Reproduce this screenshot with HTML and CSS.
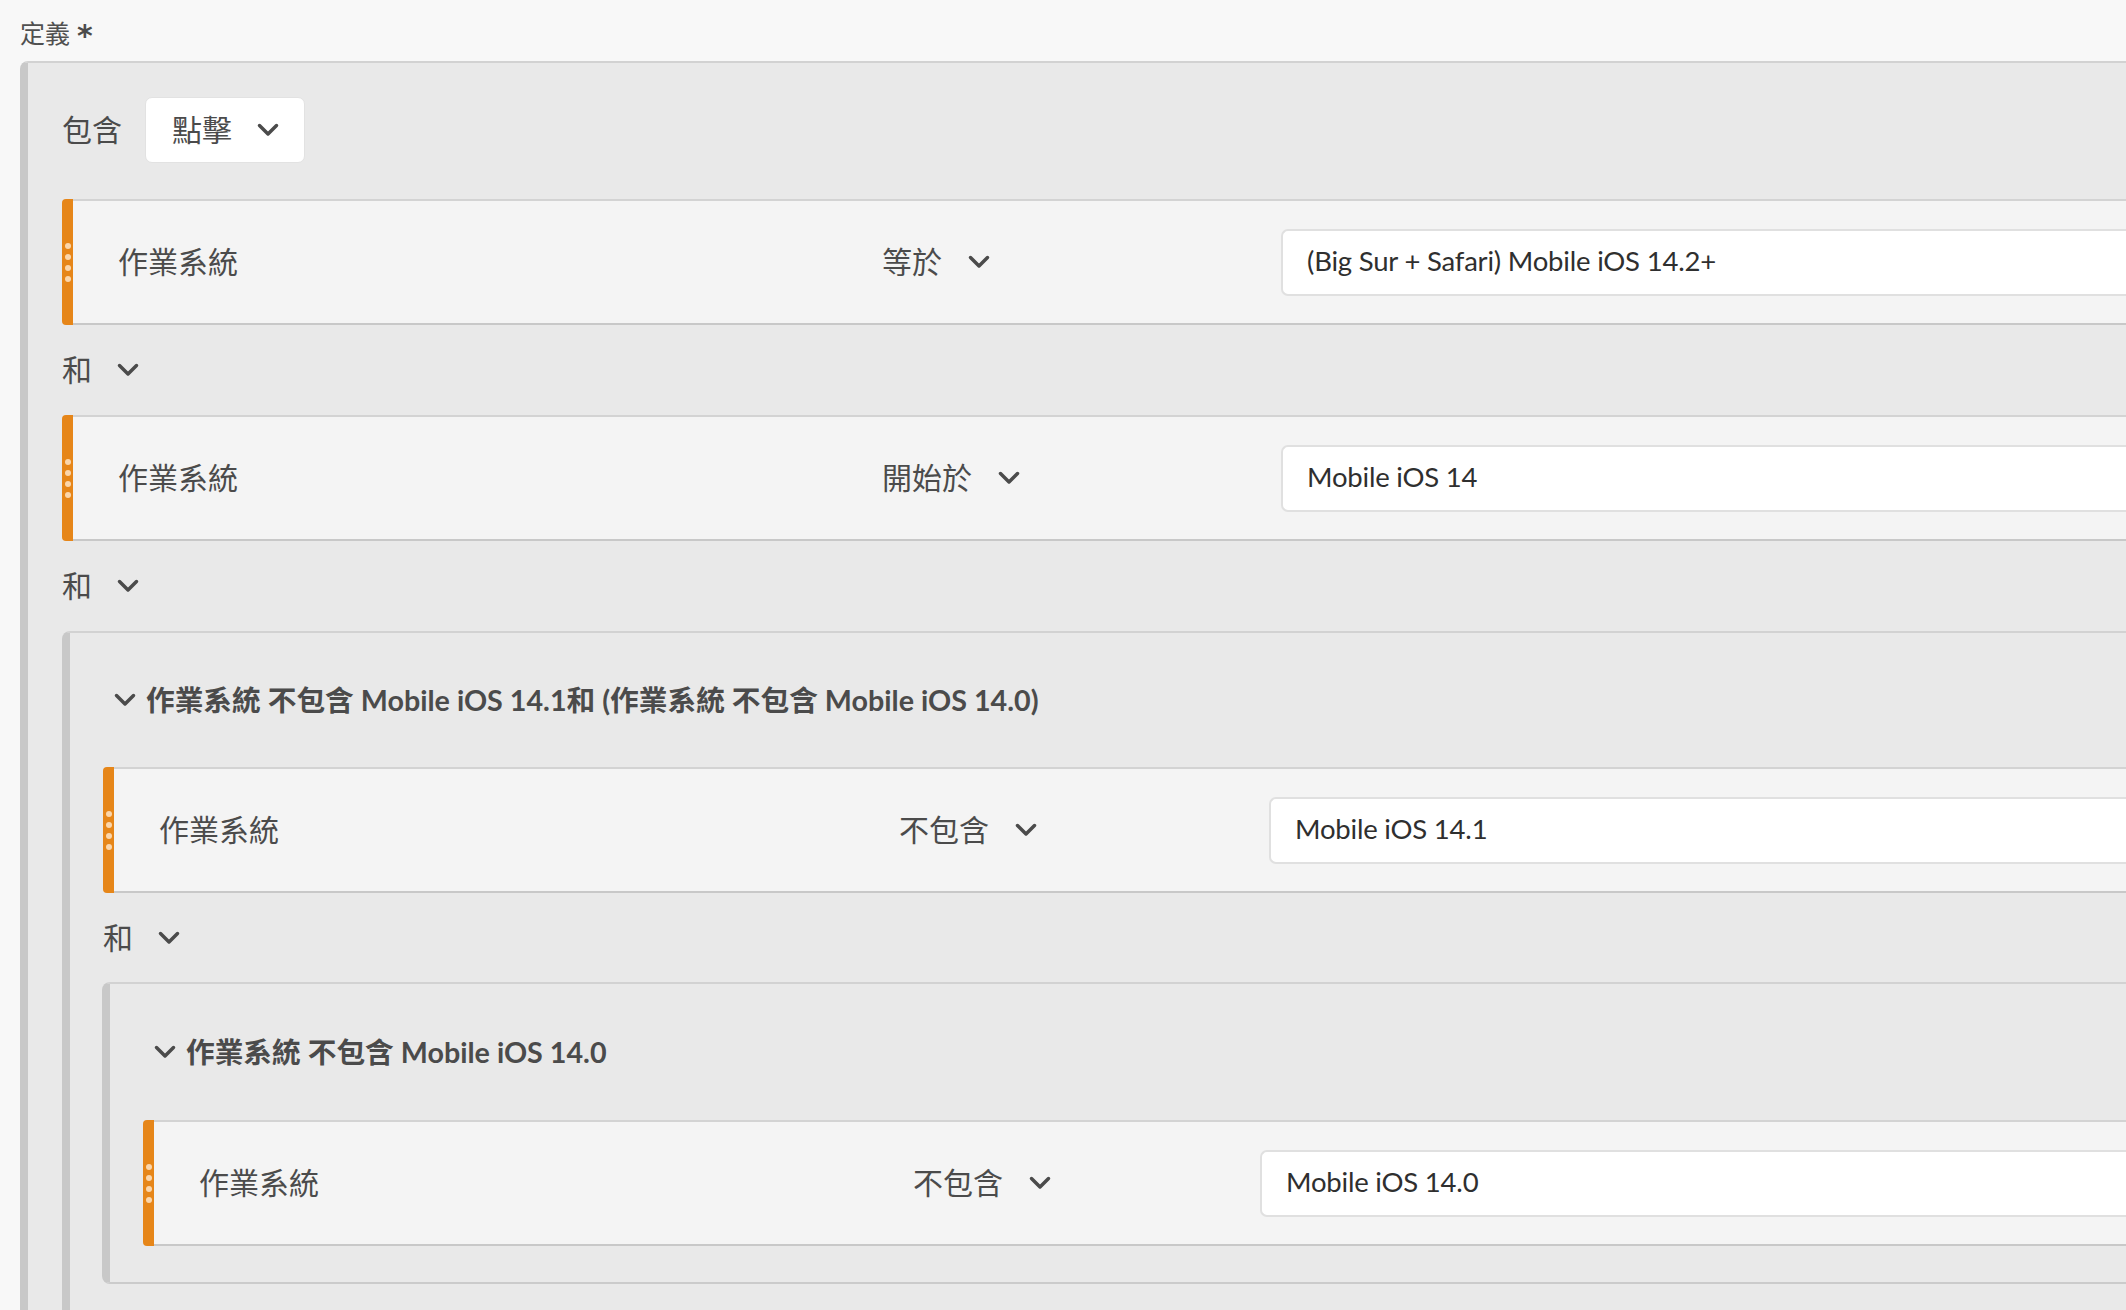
FILE: index.html
```html
<!DOCTYPE html>
<html lang="zh-Hant">
<head>
<meta charset="utf-8">
<title>定義</title>
<link rel="stylesheet" href="styles.css">
</head>
<body>
<div class="page">
  <div class="title">定義 <span class="req">*</span></div>

  <div class="container">
    <div class="topbar">
      <span class="label">包含</span>
      <div class="select">
        <span>點擊</span>
        <svg class="chev" viewBox="0 0 22 14"><path d="M2.5 2.5 L11 11 L19.5 2.5"/></svg>
      </div>
    </div>

    <div class="row row--l0">
      <div class="handle"><i></i><i></i><i></i><i></i></div>
      <div class="row-body">
        <div class="field">作業系統</div>
        <div class="op"><span>等於</span><svg class="chev" viewBox="0 0 22 14"><path d="M2.5 2.5 L11 11 L19.5 2.5"/></svg></div>
        <div class="value"><div class="input">(Big Sur + Safari) Mobile iOS 14.2+</div></div>
      </div>
    </div>

    <div class="connector"><span>和</span><svg class="chev" viewBox="0 0 22 14"><path d="M2.5 2.5 L11 11 L19.5 2.5"/></svg></div>

    <div class="row row--l0">
      <div class="handle"><i></i><i></i><i></i><i></i></div>
      <div class="row-body">
        <div class="field">作業系統</div>
        <div class="op"><span>開始於</span><svg class="chev" viewBox="0 0 22 14"><path d="M2.5 2.5 L11 11 L19.5 2.5"/></svg></div>
        <div class="value"><div class="input">Mobile iOS 14</div></div>
      </div>
    </div>

    <div class="connector"><span>和</span><svg class="chev" viewBox="0 0 22 14"><path d="M2.5 2.5 L11 11 L19.5 2.5"/></svg></div>

    <div class="group group--outer">
      <div class="group-head"><svg class="chev" viewBox="0 0 22 14"><path d="M2.5 2.5 L11 11 L19.5 2.5"/></svg><span>作業系統 不包含 Mobile iOS 14.1和 (作業系統 不包含 Mobile iOS 14.0)</span></div>

      <div class="row row--l1">
        <div class="handle"><i></i><i></i><i></i><i></i></div>
        <div class="row-body">
          <div class="field">作業系統</div>
          <div class="op"><span>不包含</span><svg class="chev" viewBox="0 0 22 14"><path d="M2.5 2.5 L11 11 L19.5 2.5"/></svg></div>
          <div class="value"><div class="input">Mobile iOS 14.1</div></div>
        </div>
      </div>

      <div class="connector connector--inner"><span>和</span><svg class="chev" viewBox="0 0 22 14"><path d="M2.5 2.5 L11 11 L19.5 2.5"/></svg></div>

      <div class="group group--inner">
        <div class="group-head group-head--inner"><svg class="chev" viewBox="0 0 22 14"><path d="M2.5 2.5 L11 11 L19.5 2.5"/></svg><span>作業系統 不包含 Mobile iOS 14.0</span></div>

        <div class="row row--l2">
          <div class="handle"><i></i><i></i><i></i><i></i></div>
          <div class="row-body">
            <div class="field">作業系統</div>
            <div class="op"><span>不包含</span><svg class="chev" viewBox="0 0 22 14"><path d="M2.5 2.5 L11 11 L19.5 2.5"/></svg></div>
            <div class="value"><div class="input">Mobile iOS 14.0</div></div>
          </div>
        </div>
      </div>
    </div>
  </div>
</div>
</body>
</html>
```

FILE: styles.css
```css
* { box-sizing: border-box; }

html, body {
  margin: 0;
  padding: 0;
  background: #f8f8f8;
  overflow: hidden;
  height: 100%;
}

body {
  font-family: "Lato", "Noto Sans CJK TC", sans-serif;
  color: #4b4b4b;
}

.page {
  padding-left: 20px;
  width: 2126px;
  overflow: hidden;
  height: 1310px;
}

.title {
  height: 61px;
  display: flex;
  align-items: center;
  padding-top: 2px;
  font-size: 25px;
  color: #505050;
  font-family: "Noto Sans CJK TC", sans-serif;
  gap: 7px;
}
.req {
  font-family: "DejaVu Sans", sans-serif;
  font-weight: 700;
  font-size: 30px;
  color: #4b4b4b;
  margin-top: 8px;
}

.container {
  margin-right: -80px;
  background: #e9e9e9;
  border-left: 8px solid #c8c8c8;
  border-top: 2px solid #d2d2d2;
  border-top-left-radius: 8px;
  padding: 34px 0 60px 34px;
}

.chev {
  width: 22px;
  height: 14px;
  flex: none;
}
.chev path {
  fill: none;
  stroke: #4b4b4b;
  stroke-width: 3.5;
  stroke-linecap: round;
  stroke-linejoin: round;
}

.label, .field, .op span, .connector span, .select span {
  font-family: "Noto Sans CJK TC", sans-serif;
  font-size: 30px;
  color: #4b4b4b;
  margin-bottom: 4px;
}

.topbar {
  display: flex;
  align-items: center;
  height: 66px;
  margin-bottom: 36px;
}
.topbar .label {
  margin-right: 23px;
}

.select {
  display: flex;
  align-items: center;
  width: 160px;
  height: 66px;
  background: #ffffff;
  border: 1px solid #e2e2e2;
  border-radius: 7px;
  padding-left: 26px;
  gap: 25px;
}

/* Rows */
.row {
  display: flex;
  height: 126px;
}

.handle {
  flex: none;
  width: 11px;
  background: #e68619;
  border-radius: 4px 0 0 4px;
  display: flex;
  flex-direction: column;
  align-items: center;
  justify-content: center;
  gap: 5px;
}
.handle i {
  display: block;
  width: 6px;
  height: 6px;
  border-radius: 50%;
  background: #fbd6ab;
}

.row-body {
  flex: 1;
  display: grid;
  align-items: center;
  background: #f4f4f4;
  border-top: 2px solid #d3d3d3;
  border-bottom: 2px solid #c8c8c8;
}
.row--l0 .row-body { grid-template-columns: 809px 399px 1fr; }
.row--l1 .row-body { grid-template-columns: 785px 370px 1fr; }
.row--l2 .row-body { grid-template-columns: 759px 347px 1fr; }

.field {
  padding-left: 45px;
}

.op {
  display: flex;
  align-items: center;
  gap: 26px;
}

.input {
  height: 67px;
  background: #ffffff;
  border: 2px solid #e0e0e0;
  border-right: none;
  border-radius: 7px 0 0 7px;
  display: flex;
  align-items: center;
  padding-left: 24px;
  padding-bottom: 3px;
  font-family: "Lato", sans-serif;
  font-size: 27.5px;
  letter-spacing: -0.2px;
  color: #2f2f2f;
}

/* Connectors */
.connector {
  display: flex;
  align-items: center;
  height: 90px;
  gap: 25px;
}
.connector--inner {
  height: 89px;
}

/* Groups */
.group {
  background: #e9e9e9;
  border-left: 8px solid #c8c8c8;
  border-top: 2px solid #d2d2d2;
  border-top-left-radius: 8px;
  padding-left: 33px;
}
.group--outer {
  padding-bottom: 80px;
}
.group--inner {
  margin-left: -1px;
  border-bottom: 2px solid #cbcbcb;
  border-bottom-left-radius: 8px;
  padding-bottom: 36px;
}

.group-head {
  display: flex;
  align-items: center;
  height: 134px;
  padding-left: 11px;
  gap: 10px;
  font-family: "Lato", "Noto Sans CJK TC", sans-serif;
  font-weight: 700;
  font-size: 28.7px;
  color: #4b4b4b;
}
.group-head span {
  margin-bottom: 3px;
}
.group-head--inner {
  height: 136px;
}
```
